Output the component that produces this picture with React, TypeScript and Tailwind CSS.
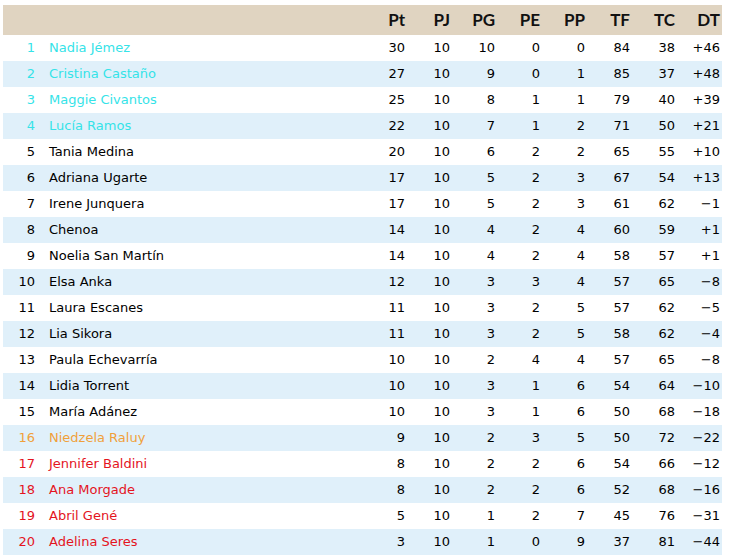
const rows: [number, string, number, number, number, number, number, number, number, string][] = [
  [1, 'Nadia Jémez', 30, 10, 10, 0, 0, 84, 38, '+46'],
  [2, 'Cristina Castaño', 27, 10, 9, 0, 1, 85, 37, '+48'],
  [3, 'Maggie Civantos', 25, 10, 8, 1, 1, 79, 40, '+39'],
  [4, 'Lucía Ramos', 22, 10, 7, 1, 2, 71, 50, '+21'],
  [5, 'Tania Medina', 20, 10, 6, 2, 2, 65, 55, '+10'],
  [6, 'Adriana Ugarte', 17, 10, 5, 2, 3, 67, 54, '+13'],
  [7, 'Irene Junquera', 17, 10, 5, 2, 3, 61, 62, '−1'],
  [8, 'Chenoa', 14, 10, 4, 2, 4, 60, 59, '+1'],
  [9, 'Noelia San Martín', 14, 10, 4, 2, 4, 58, 57, '+1'],
  [10, 'Elsa Anka', 12, 10, 3, 3, 4, 57, 65, '−8'],
  [11, 'Laura Escanes', 11, 10, 3, 2, 5, 57, 62, '−5'],
  [12, 'Lia Sikora', 11, 10, 3, 2, 5, 58, 62, '−4'],
  [13, 'Paula Echevarría', 10, 10, 2, 4, 4, 57, 65, '−8'],
  [14, 'Lidia Torrent', 10, 10, 3, 1, 6, 54, 64, '−10'],
  [15, 'María Adánez', 10, 10, 3, 1, 6, 50, 68, '−18'],
  [16, 'Niedzela Raluy', 9, 10, 2, 3, 5, 50, 72, '−22'],
  [17, 'Jennifer Baldini', 8, 10, 2, 2, 6, 54, 66, '−12'],
  [18, 'Ana Morgade', 8, 10, 2, 2, 6, 52, 68, '−16'],
  [19, 'Abril Gené', 5, 10, 1, 2, 7, 45, 76, '−31'],
  [20, 'Adelina Seres', 3, 10, 1, 0, 9, 37, 81, '−44'],
];

const headers = ['Pt', 'PJ', 'PG', 'PE', 'PP', 'TF', 'TC', 'DT'];

function nameColor(pos: number) {
  if (pos <= 4) return 'text-[#35e3e8]';
  if (pos === 16) return 'text-[#f0a03a]';
  if (pos >= 17) return 'text-[#e4141e]';
  return 'text-black';
}

export default function App() {
  return (
    <div className="bg-white w-[732px] h-[555px] overflow-hidden pt-[5px] pl-[3px]">
      <table className="w-[719px] table-fixed border-collapse font-['DejaVu_Sans',sans-serif] text-[13px] text-black">
        <colgroup>
          <col className="w-[40px]" />
          <col className="w-[319px]" />
          {headers.map((h) => (
            <col key={h} className="w-[45px]" />
          ))}
        </colgroup>
        <thead>
          <tr className="h-[30px] bg-[#e0d4c1]">
            <th />
            <th />
            {headers.map((h) => (
              <th key={h} className="text-right pr-[2px] font-['Lato',sans-serif] font-bold text-[17px] text-[#111]">
                {h}
              </th>
            ))}
          </tr>
        </thead>
        <tbody>
          {rows.map((r, i) => {
            const [pos, name, ...stats] = r;
            const color = nameColor(pos);
            return (
              <tr key={pos} className={`h-[26px] ${i % 2 === 1 ? 'bg-[#e0f0fa]' : 'bg-white'}`}>
                <td className={`text-right pr-[8px] ${color}`}>{pos}</td>
                <td className={`pl-[6px] ${color}`}>{name}</td>
                {stats.map((s, j) => (
                  <td key={j} className="text-right pr-[2px]">
                    {s}
                  </td>
                ))}
              </tr>
            );
          })}
        </tbody>
      </table>
    </div>
  );
}
